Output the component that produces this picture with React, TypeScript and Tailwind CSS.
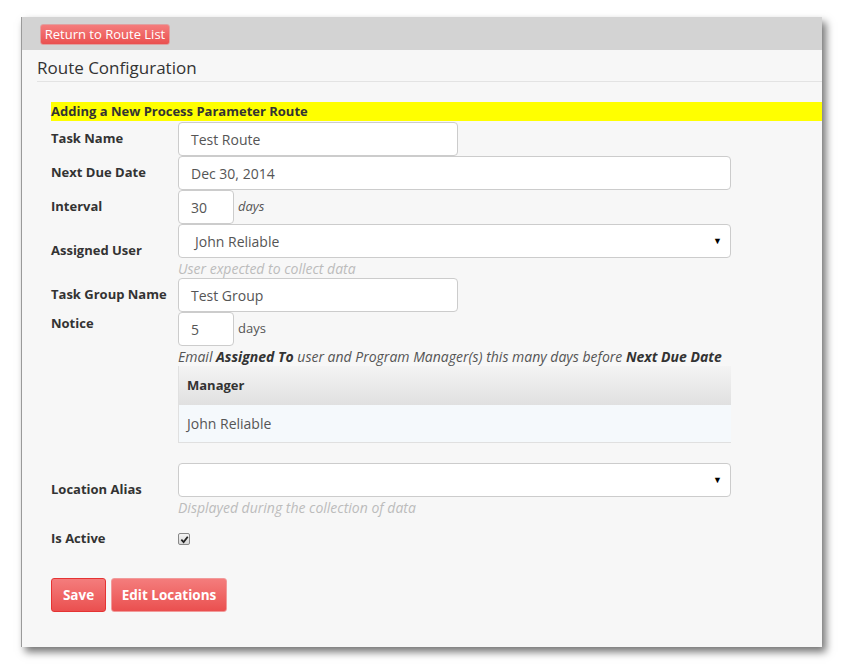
import React from 'react';

const font = { fontFamily: '"Open Sans", Lato, sans-serif' };

function Label({ children, className = '' }: { children: React.ReactNode; className?: string }) {
  return <div className={`w-[127px] shrink-0 text-[13px] font-bold text-[#333] ${className}`}>{children}</div>;
}

function TextBox({ value, w }: { value: string; w: string }) {
  return (
    <div className={`${w} h-[34px] flex items-center px-3 bg-white border border-[#ccc] rounded-[4px] text-[14px] text-[#555]`}>
      {value}
    </div>
  );
}

function SelectBox({ value }: { value: string }) {
  return (
    <div className="w-[553px] h-[34px] flex items-center justify-between pl-4 pr-2 bg-white border border-[#ccc] rounded-[4px] text-[14px] text-[#555]">
      <span>{value}</span>
      <span className="text-[9px] text-black">▼</span>
    </div>
  );
}

function RedButton({ children, className = '' }: { children: React.ReactNode; className?: string }) {
  return (
    <button
      type="button"
      className={`bg-gradient-to-b from-[#f47c7c] to-[#ea4f4f] text-white rounded-[3px] ${className}`}
    >
      {children}
    </button>
  );
}

export default function App() {
  return (
    <div className="w-[841px] h-[666px] bg-white pt-[17px] pl-[21px]" style={font}>
      <div className="w-[801px] h-[630px] bg-[#f7f7f7] border-l border-[#9a9a9a] shadow-[4px_5px_8px_rgba(0,0,0,0.55)] flex flex-col">
        {/* Top bar */}
        <div className="h-[33px] bg-[#d3d3d3] flex items-start pt-[7px] pl-[18px]">
          <RedButton className="h-[21px] w-[130px] text-[13px] border border-[#e0a0a0] leading-none">
            Return to Route List
          </RedButton>
        </div>

        {/* Title */}
        <div className="pl-[15px]">
          <div className="h-[31px] flex items-end pb-[1px] text-[17px] text-[#333]">Route Configuration</div>
          <div className="h-px bg-[#e3e3e3]" />
        </div>

        {/* Form */}
        <div className="pl-[29px] pt-[20px]">
          <div className="h-[19px] bg-[#ffff00] flex items-center text-[13px] font-bold text-[#333]">
            Adding a New Process Parameter Route
          </div>

          <div className="flex items-center h-[34px] mt-px">
            <Label>Task Name</Label>
            <TextBox value="Test Route" w="w-[280px]" />
          </div>

          <div className="flex items-center h-[34px]">
            <Label>Next Due Date</Label>
            <TextBox value="Dec 30, 2014" w="w-[553px]" />
          </div>

          <div className="flex items-center h-[34px]">
            <Label>Interval</Label>
            <TextBox value="30" w="w-[56px]" />
            <span className="ml-[4px] text-[13px] italic text-[#555]">days</span>
          </div>

          <div className="flex items-center">
            <Label>Assigned User</Label>
            <div>
              <SelectBox value="John Reliable" />
              <div className="h-[20px] flex items-center text-[14px] italic text-[#bcbcbc]">User expected to collect data</div>
            </div>
          </div>

          <div className="flex items-center h-[34px]">
            <Label>Task Group Name</Label>
            <TextBox value="Test Group" w="w-[280px]" />
          </div>

          <div className="flex items-start">
            <Label className="pt-[2px]">Notice</Label>
            <div>
              <div className="flex items-center h-[34px]">
                <TextBox value="5" w="w-[56px]" />
                <span className="ml-[4px] text-[13px] text-[#555]">days</span>
              </div>
              <div className="h-[20px] flex items-center text-[14px] italic text-[#555] whitespace-nowrap">
                Email&nbsp;<b className="text-[#333]">Assigned To</b>&nbsp;user and Program Manager(s) this many days before&nbsp;<b className="text-[#333]">Next Due Date</b>
              </div>
              <div className="w-[553px] border-l border-b border-[#e0e0e0]">
                <div className="h-[39px] flex items-center px-[8px] bg-gradient-to-b from-[#f4f4f4] to-[#e0e0e0] text-[13px] font-bold text-[#333]">
                  Manager
                </div>
                <div className="h-[37px] flex items-center px-[8px] bg-[#f5f9fc] text-[14px] text-[#555]">
                  John Reliable
                </div>
              </div>
            </div>
          </div>

          <div className="flex items-center mt-[20px]">
            <Label>Location Alias</Label>
            <div>
              <SelectBox value="" />
              <div className="h-[20px] flex items-center text-[14px] italic text-[#bcbcbc]">Displayed during the collection of data</div>
            </div>
          </div>

          <div className="flex items-center h-[20px] mt-[12px]">
            <Label>Is Active</Label>
            <div className="w-[12px] h-[12px] rounded-[2px] border border-[#888] bg-gradient-to-b from-[#f4f4f4] to-[#d8d8d8] flex items-center justify-center">
              <svg width="9" height="9" viewBox="0 0 10 10">
                <path d="M1.5 5.2 L4 7.8 L8.6 2" fill="none" stroke="#222" strokeWidth="2" />
              </svg>
            </div>
          </div>

          <div className="flex gap-[5px] mt-[29px]">
            <RedButton className="h-[34px] w-[55px] text-[13.5px] font-bold border border-[#e53333]">Save</RedButton>
            <RedButton className="h-[34px] w-[116px] text-[13.5px] font-bold border border-[#f19a9a]">Edit Locations</RedButton>
          </div>
        </div>
      </div>
    </div>
  );
}
